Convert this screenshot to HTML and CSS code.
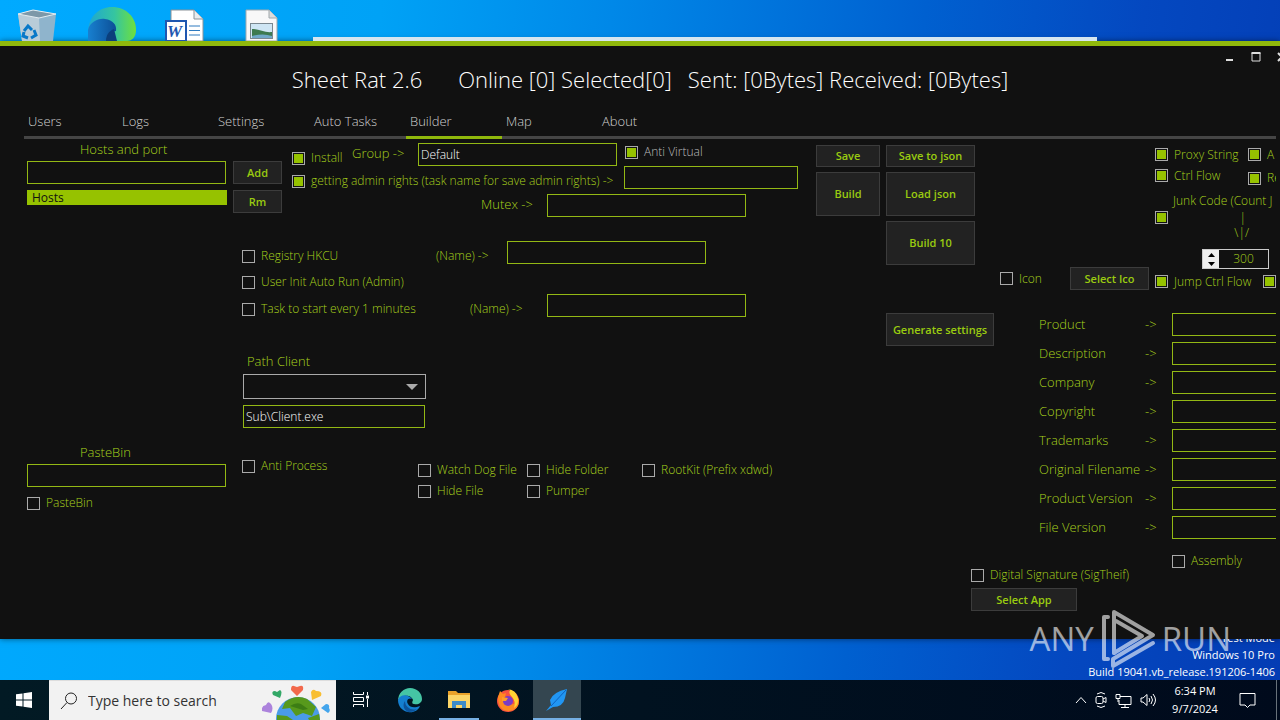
FILE: index.html
```html
<!DOCTYPE html>
<html lang="en">
<head>
<meta charset="utf-8">
<title>Sheet Rat 2.6</title>
<link rel="stylesheet" href="styles.css">
</head>
<body>
<main class="desktop">
  <div class="shortcuts">
    <svg class="shortcut" viewBox="0 0 75 41"><path d="M18 14L33 10L56 14L53 41H22Z" fill="#8fb4cc"/><path d="M18 14L39 18L40 41H22Z" fill="#b9ccd8"/><path d="M18 14L33 10L56 14L39 18Z" fill="#7d98a8" stroke="#e4edf2"/><path d="M24 31l4-5 4 4M34 30l2 5-5 3M28 38l-5-2 1-4" fill="none" stroke="#0878c8" stroke-width="3"/></svg>
    <svg class="shortcut" viewBox="0 0 75 41"><defs><linearGradient id="eg" x1="0" x2="1"><stop offset="0" stop-color="#1fa6d2"/><stop offset=".55" stop-color="#35c5a0"/><stop offset="1" stop-color="#6fe03c"/></linearGradient><linearGradient id="eb" x1="0" x2="1"><stop offset="0" stop-color="#1880d0"/><stop offset="1" stop-color="#0c4f96"/></linearGradient></defs><path d="M13 31C14 16 24 7 37 7C51 7 61 17 61 30C61 37 57 41 52 41H36Z" fill="url(#eg)"/><path d="M13 41V30C15 22 23 18 30 19C38 20 42 25 41 31C37 31 34 36 35 41Z" fill="url(#eb)"/><path d="M31 41C31 35 34 31 39 29L42 41Z" fill="#0b3f7c"/></svg>
    <svg class="shortcut" viewBox="0 0 75 41"><path d="M21 10H44L53 19V41H21Z" fill="#fff" stroke="#8a9298"/><path d="M44 10V19H53" fill="#e8ecef" stroke="#8a9298"/><path d="M39 26H50M39 30.500H50M39 35H50" stroke="#2e7ac0"/><rect x="15" y="20" width="22" height="21" fill="#1f57b0"/><rect x="17" y="22" width="18" height="18" fill="#fff"/><text class="word-mark" x="17" y="37">W</text></svg>
    <svg class="shortcut" viewBox="0 0 75 41"><path d="M21 10H44L52 18V41H21Z" fill="#f8f8f8" stroke="#a0a8ac"/><path d="M44 10V18H52" fill="#ddd" stroke="#a0a8ac"/><rect x="25.500" y="23.500" width="22" height="15" fill="#cfe6f4" stroke="#7b8890"/><path d="M27 29C34 29 40 33 47 32V38H27Z" fill="#3d7a50"/><path d="M27 36Q38 33 47 36V38H27Z" fill="#6fa8c8"/></svg>
    <div class="back-window"></div>
  </div>

  <section class="window">
    <header class="titlebar">
      <h1 class="title"><span>Sheet Rat 2.6</span><span>Online [0] Selected[0]</span><span>Sent: [0Bytes] Received: [0Bytes]</span></h1>
      <div class="caption">
        <button aria-label="Minimize"><svg width="10" height="12"><path d="M1 10H8" stroke="#ddd" stroke-width="2"/></svg></button>
        <button aria-label="Maximize"><svg width="10" height="12"><path d="M1 3V11H9V3" fill="none" stroke="#ddd"/><path d="M0.500 3H9.500" stroke="#ddd" stroke-width="2"/></svg></button>
        <button aria-label="Close"><svg width="10" height="12"><path d="M1 3L9 11M9 3L1 11" stroke="#ddd" stroke-width="2"/></svg></button>
      </div>
    </header>
    <nav class="tabs">
      <button>Users</button><button>Logs</button><button>Settings</button><button>Auto Tasks</button><button class="active">Builder</button><button>Map</button><button>About</button>
    </nav>

    <div class="panel">
      <div class="hosts">
        <label class="caption-text" for="host">Hosts and port</label>
        <input id="host" class="box" type="text">
        <ul class="host-list"><li>Hosts</li></ul>
        <div class="paste">
          <label class="caption-text" for="paste">PasteBin</label>
          <input id="paste" class="box" type="text">
          <label class="check"><input type="checkbox">PasteBin</label>
        </div>
      </div>

      <div class="settings">
        <div class="top">
          <div class="host-actions"><button class="btn">Add</button><button class="btn">Rm</button></div>
          <div class="install">
            <div class="row">
              <label class="check low"><input type="checkbox" checked>Install</label>
              <label class="lbl group" for="group">Group -&gt;</label>
              <input id="group" class="box" type="text" value="Default">
              <label class="check muted"><input type="checkbox" checked>Anti Virtual</label>
            </div>
            <div class="row spread">
              <label class="check low"><input type="checkbox" checked>getting admin rights (task name for save admin rights) -&gt;</label>
              <input class="box task" type="text" aria-label="Task name">
            </div>
            <div class="row mutex">
              <label class="lbl" for="mutex">Mutex -&gt;</label>
              <input id="mutex" class="box" type="text">
            </div>
          </div>
        </div>
        <div class="startup">
          <div class="row named short">
            <label class="check low"><input type="checkbox">Registry HKCU</label>
            <label class="check low" for="regname">(Name) -&gt;</label>
            <input id="regname" class="box" type="text">
          </div>
          <label class="check init"><input type="checkbox">User Init Auto Run (Admin)</label>
          <div class="row named">
            <label class="check low"><input type="checkbox">Task to start every 1 minutes</label>
            <label class="check low" for="taskname">(Name) -&gt;</label>
            <input id="taskname" class="box" type="text">
          </div>
          <div class="path">
            <label class="lbl" for="path">Path Client</label>
            <div class="select-wrap"><select id="path"><option></option></select></div>
            <input class="box" type="text" value="Sub\Client.exe" aria-label="Client file">
          </div>
          <div class="extras">
            <label class="check"><input type="checkbox">Anti Process</label>
            <div class="flags">
              <label class="check"><input type="checkbox">Watch Dog File</label>
              <label class="check"><input type="checkbox">Hide Folder</label>
              <label class="check"><input type="checkbox">RootKit (Prefix xdwd)</label>
              <label class="check"><input type="checkbox">Hide File</label>
              <label class="check"><input type="checkbox">Pumper</label>
            </div>
          </div>
        </div>
      </div>

      <div class="actions">
        <div class="stack narrow"><button class="btn">Save</button><button class="btn tall">Build</button></div>
        <div class="stack">
          <button class="btn">Save to json</button><button class="btn tall">Load json</button><button class="btn tall">Build 10</button>
          <button class="btn generate">Generate settings</button>
        </div>
      </div>

      <div class="details">
        <div class="protect">
          <div class="ico"><label class="check"><input type="checkbox">Icon</label><button class="btn">Select Ico</button></div>
          <div class="guards">
            <div class="pair"><label class="check"><input type="checkbox" checked>Proxy String</label><label class="check"><input type="checkbox" checked>A</label></div>
            <div class="pair"><label class="check"><input type="checkbox" checked>Ctrl Flow</label><label class="check low"><input type="checkbox" checked>Re</label></div>
            <label class="junk-label" for="junk">Junk Code (Count J</label>
            <div class="pointer"><input id="junk" type="checkbox" checked><span>|</span></div>
            <div class="pointer tip"><span>\|/</span></div>
            <div class="spinner">
              <div class="arrows"><button aria-label="Increase"><svg width="7" height="4"><path d="M0 4L3.500 0L7 4Z"/></svg></button><button aria-label="Decrease"><svg width="7" height="4"><path d="M0 0L3.500 4L7 0Z"/></svg></button></div>
              <input type="text" inputmode="numeric" value="300" aria-label="Junk count">
            </div>
            <div class="pair jump"><label class="check"><input type="checkbox" checked>Jump Ctrl Flow</label><input type="checkbox" aria-label="Flow option" checked></div>
          </div>
        </div>
        <div class="props">
          <label for="p1">Product</label><span>-&gt;</span><input id="p1" class="box" type="text">
          <label for="p2">Description</label><span>-&gt;</span><input id="p2" class="box" type="text">
          <label for="p3">Company</label><span>-&gt;</span><input id="p3" class="box" type="text">
          <label for="p4">Copyright</label><span>-&gt;</span><input id="p4" class="box" type="text">
          <label for="p5">Trademarks</label><span>-&gt;</span><input id="p5" class="box" type="text">
          <label for="p6">Original Filename</label><span>-&gt;</span><input id="p6" class="box" type="text">
          <label for="p7">Product Version</label><span>-&gt;</span><input id="p7" class="box" type="text">
          <label for="p8">File Version</label><span>-&gt;</span><input id="p8" class="box" type="text">
        </div>
        <div class="sign">
          <div class="sign-left"><label class="check"><input type="checkbox">Digital Signature (SigTheif)</label><button class="btn">Select App</button></div>
          <label class="check"><input type="checkbox">Assembly</label>
        </div>
      </div>
    </div>
  </section>

  <div class="build-info"><div>Test Mode</div><div>Windows 10 Pro</div><div>Build 19041.vb_release.191206-1406</div></div>

  <div class="watermark">
    <span>ANY</span>
    <svg width="56" height="60" viewBox="0 0 56 60" fill="none" stroke="#fff" stroke-width="4" stroke-linecap="round" stroke-linejoin="round"><path d="M8 8H4V50H8"/><path d="M14 44V3L53 26L13 50V57L53 34"/><path d="M14 44L42 27L16 12"/></svg>
    <span>RUN</span>
  </div>
</main>

<footer class="taskbar">
  <button class="start" aria-label="Start"><svg width="16" height="16" fill="#fff"><path d="M0 2.300L6.500 1.400V7.500H0ZM7.500 1.200L16 0V7.500H7.500ZM0 8.500H6.500V14.600L0 13.700ZM7.500 8.500H16V16L7.500 14.800Z"/></svg></button>
  <label class="search">
    <svg width="18" height="18" fill="none" stroke="#222"><circle cx="11" cy="6.500" r="5.500"/><path d="M7 10.500L1 17"/></svg>
    <input type="text" placeholder="Type here to search" aria-label="Search">
    <svg width="72" height="38" viewBox="0 0 72 38"><circle cx="36" cy="37" r="22" fill="#4a9be8"/><path d="M23 20Q34 12 45 17L54 25L50 34L41 31L34 34L28 26L20 27ZM15 33L25 34L31 38H15ZM46 36L57 32L58 38H47Z" fill="#57991c"/><path d="M28 24Q34 20 39 22L46 27L41 28Z" fill="#3c7d14"/><path d="M35 14L29 8Q29 3 32 4L35 5L38 4Q42 3 41 8Z" fill="#f2694c"/><path d="M18 16L11 13Q9 9 13 9L15 10L18 8Q21 9 18 16Z" fill="#33a867"/><path d="M50 18L49 10Q51 6 54 9Q61 9 59 14Z" fill="#f8be32"/><path d="M9 31L0 29Q-1 24 4 23Q6 18 9 22Q12 26 9 31Z" fill="#ac83dc"/><path d="M59 26L64 22Q68 22 67 26Q69 29 66 31Z" fill="#43a5ec"/></svg>
  </label>
  <button class="app" aria-label="Task view"><svg width="18" height="18" fill="none" stroke="#fff"><path d="M1.500 1V3.500H11.500V1M1.500 16V13.500H11.500V16M1.500 6.500H11.500V10.500H1.500ZM15.500 1V4M15.500 8V16"/><path d="M14 6H17" stroke-width="3"/></svg></button>
  <button class="app" aria-label="Edge"><svg width="26" height="26" viewBox="0 0 26 26"><path d="M1 14C1 6 7 1 13 1C20 1 25 6 25 12C25 16 21 18 17 17Q14 17 16 13C15 9 10 8 7 9Q2 10 1 14Z" fill="#45c5a4"/><path d="M1 13C3 7 11 7 15 12C11 10 9 14 11 17C13 21 18 21 23 19C21 24 16 26 11 25C5 24 1 19 1 13Z" fill="#147fd0"/><path d="M8 14C8 20 14 24 20 22C17 25 13 25 11 25C7 23 5 18 8 14Z" fill="#0c539b"/></svg></button>
  <button class="app open" aria-label="File Explorer"><svg width="22" height="20"><path d="M0 1H8L10 3H22V18H0Z" fill="#e9a22a"/><path d="M0 5H22V18H0Z" fill="#fbd567"/><path d="M4 18V11H18V18H14V15H8V18Z" fill="#3c8bc8"/></svg></button>
  <button class="app" aria-label="Firefox"><svg width="24" height="24"><circle cx="12" cy="13" r="11" fill="#f8523f"/><path d="M2 9L4 3L7 6L10 5L9 9L13 11Q14 19 20 15L23 10Q24 22 13 23Q2 23 2 9Z" fill="#ff8a20"/><path d="M12 1Q20 2 22 10Q23 17 18 20Q20 13 16 9Q12 5 14 2Z" fill="#ffd333"/><circle cx="12" cy="13" r="5" fill="#7c3cc4"/><path d="M6 9L12 10L10 13L6 13Z" fill="#ff9d28"/></svg></button>
  <button class="app current" aria-label="Sheet Rat"><svg width="22" height="22"><path d="M21 0Q7 3 4 11L5 16L0 22L7 18Q17 18 19 9Z" fill="#2196f3"/><path d="M20 1L5 17" stroke="#0c62c0"/></svg></button>
  <div class="tray">
    <svg width="12" height="8" fill="none" stroke="#fff"><path d="M1 7L6 1.500L11 7"/></svg>
    <svg width="12" height="16" fill="none" stroke="#fff"><rect x="1" y="4.500" width="7" height="7" rx="1.500"/><path d="M8 7L11 5.500V10.500L8 9M2 2Q6 -1 10 2M2 14Q6 17 10 14"/></svg>
    <svg width="17" height="15" fill="none" stroke="#fff"><path d="M5 3.500H16V11.500H4V7M10 12V14.500M6 14.500H14M1 1.500H5V5.500H1ZM3 6V9"/></svg>
    <svg width="17" height="14" fill="none" stroke="#fff"><path d="M1 5H3L7 1.500V12.500L3 9H1ZM9 5Q10.500 7 9 9M11 3Q14 7 11 11M13 1Q18 7 13 13"/></svg>
    <div class="clock"><span>6:34 PM</span><span>9/7/2024</span></div>
    <svg width="17" height="17" fill="none" stroke="#fff"><path d="M1 1.500H16V13H11L8.500 15.500L6 13H1Z"/></svg>
    <div class="peek"></div>
  </div>
</footer>
</body>
</html>
```
FILE: styles.css
```css
* { box-sizing: border-box; }
body {
  margin: 0;
  min-height: 100vh;
  display: flex;
  flex-direction: column;
  overflow: hidden;
  font-family: "Open Sans", "Noto Sans", sans-serif;
  font-size: 12px;
  font-weight: 300;
  line-height: 18px;
  color: #a6d01c;
}
button, input, select { font: inherit; color: inherit; margin: 0; padding: 0; border: 0; border-radius: 0; background: none; }
svg { display: block; flex: none; }

.desktop {
  position: relative;
  flex: 1;
  display: flex;
  flex-direction: column;
  background: linear-gradient(97deg, #00aaff 0%, #00a2f6 28%, #0088e8 45%, #0060d0 68%, #0448c0 84%, #043cb4 100%);
}
.shortcuts { position: relative; height: 41px; display: flex; overflow: hidden; }
.shortcut { width: 75px; height: 41px; }
.word-mark { font: italic 700 17px "Liberation Serif", serif; fill: #1f57b0; }
.back-window { position: absolute; left: 313px; right: 183px; bottom: 0; height: 4px; background: #d6e6f0; }

.window {
  background: #111111;
  border-top: 5px solid #90b80c;
  box-shadow: 0 0 6px rgba(0, 0, 0, .5);
  padding: 0 4px 25px 24px;
}
.titlebar { position: relative; height: 58px; display: flex; justify-content: center; }
.title { display: flex; gap: 36px; margin: 16px 0 0; font-size: 22px; line-height: 34px; font-weight: 300; color: #fff; white-space: nowrap; }
.title span:last-child { margin-left: -20px; }
.caption { position: absolute; right: -11px; top: 4px; display: flex; gap: 16px; }
.tabs { display: flex; height: 35px; border-bottom: 3px solid #454545; }
.tabs button { width: 96px; height: 35px; padding: 2px 4px 0; text-align: left; font-size: 13px; color: #d0d0d0; border-bottom: 3px solid transparent; }
.tabs button:first-child { width: 94px; }
.tabs .active { border-color: #90b80c; }

.panel { display: flex; overflow: hidden; padding-left: 3px; height: 475px; white-space: nowrap; }
.box { display: block; flex: none; width: 199px; height: 23px; padding: 0 2px; border: 1px solid #93b814; color: #ffffff; }
.btn { display: block; height: 23px; background: #222222; border: 1px solid #3c3c3c; color: #9acb10; font-size: 11px; font-weight: 600; text-align: center; }
.lbl, .caption-text { font-size: 13px; }
.check { display: flex; align-items: center; gap: 6px; height: 18px; }
.check.low { align-self: flex-end; height: 16px; }
.check.muted { color: #bcbcbc; margin-left: 8px; }
input[type="checkbox"] { appearance: none; flex: none; width: 13px; height: 13px; border: 1px solid #aaa; background: #111111; }
input[type="checkbox"]:checked { background: #96c200; box-shadow: inset 0 0 0 1px #111111; }

.hosts { width: 206px; flex: none; display: flex; flex-direction: column; }
.caption-text { padding-left: 53px; height: 22px; line-height: 20px; }
.host-list { list-style: none; margin: 6px 6px 0 0; padding: 0; background: #96c200; color: #111111; font-weight: 400; line-height: 15px; }
.host-list li { padding-left: 5px; }
.paste { margin-top: 237px; display: flex; flex-direction: column; }
.paste .check { margin-top: 7px; }

.settings { width: 583px; flex: none; padding-top: 4px; }
.top { display: flex; gap: 10px; }
.host-actions { width: 49px; padding-top: 18px; display: flex; flex-direction: column; gap: 6px; }
.row { display: flex; align-items: flex-start; }
.install { width: 506px; }
.install .row:first-child { display: grid; grid-template-columns: 60px 66px 199px 1fr; }
.group { line-height: 21px; }
.spread { justify-content: space-between; }
.task { width: 174px; }
.mutex { margin-top: 5px; padding-left: 189px; }
.mutex .lbl { width: 66px; line-height: 21px; }
.startup { padding: 24px 0 0 9px; }
.named { display: grid; grid-template-columns: 228px 77px 199px; }
.short { grid-template-columns: 194px 71px 199px; }
.init { margin: 9px 0 3px; }
.path { display: flex; flex-direction: column; width: 184px; margin-top: 34px; padding-left: 1px; }
.path .lbl { padding: 0 4px 2px; line-height: 21px; }
.path .box { width: 182px; }
.select-wrap { position: relative; margin-bottom: 6px; }
.select-wrap::after { content: ""; position: absolute; right: 8px; top: 10px; border: 6px solid transparent; border-top-color: #aaa; border-bottom: 0; }
select { display: block; width: 100%; height: 25px; appearance: none; border: 1px solid #aaa; }
.extras { display: grid; grid-template-columns: 176px 1fr; padding-top: 29px; }
.flags { display: grid; grid-template-columns: 109px 115px 1fr; row-gap: 3px; padding-top: 4px; }

.actions { display: flex; gap: 6px; width: 155px; flex: none; padding-top: 6px; }
.actions .btn { height: 22px; }
.actions .tall { height: 44px; }
.actions .generate { width: 108px; height: 33px; margin-top: 43px; }
.stack { width: 89px; display: flex; flex-direction: column; gap: 5px; flex: none; }
.narrow { width: 64px; }

.details { flex: 1; min-width: 0; padding-top: 5px; }
.protect { display: flex; padding-left: 29px; gap: 6px; }
.ico { display: flex; justify-content: space-between; align-items: center; align-self: flex-end; width: 149px; flex: none; padding-bottom: 2px; }
.ico .btn { width: 79px; }
.pair { display: grid; grid-template-columns: 93px 1fr; align-items: center; height: 21px; }
.junk-label { display: block; padding: 6px 0 0 18px; }
.pointer { display: flex; align-items: center; justify-content: space-between; height: 15px; width: 91px; }
.tip { justify-content: flex-end; width: 94px; }
.spinner { display: flex; width: 67px; height: 20px; margin: 9px 0 2px 47px; border: 1px solid #ccc; }
.arrows { width: 16px; background: #eee; }
.arrows button { display: flex; align-items: center; justify-content: center; width: 16px; height: 9px; }
.spinner input { width: 49px; text-align: center; }
.jump { grid-template-columns: 108px 1fr; }
.props { display: grid; grid-template-columns: 106px 27px 1fr; grid-auto-rows: 29px; padding: 21px 0 0 68px; font-size: 13px; line-height: 22px; }
.sign { display: flex; justify-content: space-between; padding: 7px 0 0; }
.sign > .check { width: 104px; }
.sign-left { padding-top: 14px; }
.sign-left .btn { width: 106px; margin-top: 4px; }

.build-info { flex: 1 0 0; min-height: 41px; overflow: hidden; display: flex; flex-direction: column; justify-content: flex-end; align-items: flex-end; padding-right: 5px; color: #fff; font-size: 11px; font-weight: 400; line-height: 17px; height: 41px; }
.build-info div { flex: none; }
.watermark { position: absolute; right: 49px; bottom: 11px; display: flex; align-items: center; gap: 6px; opacity: .6; color: #fff; font: 400 33px/60px "Liberation Sans Narrow", "Open Sans", sans-serif; }

.taskbar { display: flex; gap: 1px; height: 40px; background: linear-gradient(90deg, #021a24, #000a1c); color: #fff; }
.taskbar button { display: flex; align-items: center; justify-content: center; width: 48px; }
.search { display: flex; align-items: center; width: 287px; background: #f2f2f2; padding: 0 2px 0 11px; border-top: 1px solid #ddd; }
.search input { flex: 1; min-width: 0; padding-left: 10px; font-size: 14px; font-weight: 400; color: #333; }
.search input::placeholder { color: #333; opacity: 1; }
.search svg:last-child { align-self: flex-end; }
.taskbar .open { background: linear-gradient(#76b0e4, #76b0e4) center bottom / 40px 2px no-repeat; }
.taskbar .current { background: #344650; box-shadow: inset 0 -2px #76b0e4; }
.tray { margin-left: auto; display: flex; align-items: center; gap: 8px; }
.clock { display: flex; flex-direction: column; align-items: center; width: 60px; margin-right: 6px; font-size: 11px; font-weight: 400; }
.peek { width: 4px; height: 40px; margin-left: 12px; border-left: 1px solid #68727a; }
```
